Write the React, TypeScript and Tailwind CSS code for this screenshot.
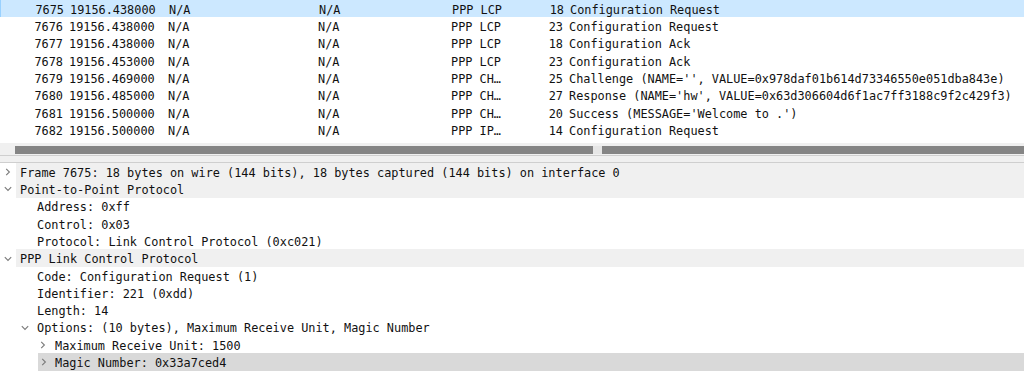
import React from 'react';

type Packet = {
  no: string;
  time: string;
  src: string;
  dst: string;
  proto: string;
  len: string;
  info: string;
};

const packets: Packet[] = [
  { no: '7675', time: '19156.438000', src: 'N/A', dst: 'N/A', proto: 'PPP LCP', len: '18', info: 'Configuration Request' },
  { no: '7676', time: '19156.438000', src: 'N/A', dst: 'N/A', proto: 'PPP LCP', len: '23', info: 'Configuration Request' },
  { no: '7677', time: '19156.438000', src: 'N/A', dst: 'N/A', proto: 'PPP LCP', len: '18', info: 'Configuration Ack' },
  { no: '7678', time: '19156.453000', src: 'N/A', dst: 'N/A', proto: 'PPP LCP', len: '23', info: 'Configuration Ack' },
  { no: '7679', time: '19156.469000', src: 'N/A', dst: 'N/A', proto: 'PPP CH…', len: '25', info: "Challenge (NAME='', VALUE=0x978daf01b614d73346550e051dba843e)" },
  { no: '7680', time: '19156.485000', src: 'N/A', dst: 'N/A', proto: 'PPP CH…', len: '27', info: "Response (NAME='hw', VALUE=0x63d306604d6f1ac7ff3188c9f2c429f3)" },
  { no: '7681', time: '19156.500000', src: 'N/A', dst: 'N/A', proto: 'PPP CH…', len: '20', info: "Success (MESSAGE='Welcome to .')" },
  { no: '7682', time: '19156.500000', src: 'N/A', dst: 'N/A', proto: 'PPP IP…', len: '14', info: 'Configuration Request' },
];

type Node = {
  text: string;
  level: 0 | 1 | 2;
  arrow?: 'right' | 'down';
  top?: boolean;
  selected?: boolean;
};

const tree: Node[] = [
  { text: 'Frame 7675: 18 bytes on wire (144 bits), 18 bytes captured (144 bits) on interface 0', level: 0, arrow: 'right', top: true },
  { text: 'Point-to-Point Protocol', level: 0, arrow: 'down', top: true },
  { text: 'Address: 0xff', level: 1 },
  { text: 'Control: 0x03', level: 1 },
  { text: 'Protocol: Link Control Protocol (0xc021)', level: 1 },
  { text: 'PPP Link Control Protocol', level: 0, arrow: 'down', top: true },
  { text: 'Code: Configuration Request (1)', level: 1 },
  { text: 'Identifier: 221 (0xdd)', level: 1 },
  { text: 'Length: 14', level: 1 },
  { text: 'Options: (10 bytes), Maximum Receive Unit, Magic Number', level: 1, arrow: 'down' },
  { text: 'Maximum Receive Unit: 1500', level: 2, arrow: 'right' },
  { text: 'Magic Number: 0x33a7ced4', level: 2, arrow: 'right', selected: true },
];

const indents = ['w-0', 'w-[17px]', 'w-[35px]'];

const Arrow = ({ dir }: { dir?: 'right' | 'down' }) => {
  if (!dir) return null;
  if (dir === 'right') {
    return (
      <svg width="6" height="8" viewBox="0 0 6 8">
        <path d="M1.2 0.8 L4.4 4 L1.2 7.2" fill="none" stroke="#7a7a7a" strokeWidth="1.1" />
      </svg>
    );
  }
  return (
    <svg width="8" height="6" viewBox="0 0 8 6">
      <path d="M0.8 1.2 L4 4.4 L7.2 1.2" fill="none" stroke="#7a7a7a" strokeWidth="1.1" />
    </svg>
  );
};

const PacketRow = ({ p, selected }: { p: Packet; selected: boolean }) => (
  <div
    className={`flex h-[17.3px] items-center pt-[4px] whitespace-pre ${
      selected ? 'bg-[#cce8ff] border-l border-[#99d1ff]' : ''
    }`}
  >
    <div className="w-[63px] text-right">{p.no}</div>
    <div className="w-[105px] pl-[6px]">{p.time}</div>
    <div className="w-[150px]">{p.src}</div>
    <div className="w-[133px]">{p.dst}</div>
    <div className="w-[89px]">{p.proto}</div>
    <div className="w-[23px] text-right">{p.len}</div>
    <div className="flex-1 pl-[6px]">{p.info}</div>
  </div>
);

const TreeRow = ({ n }: { n: Node }) => {
  if (n.selected) {
    return (
      <div className="flex h-[17.3px] whitespace-pre">
        <div className="w-[38px]" />
        <div className="flex flex-1 items-center bg-[#d9d9d9] pt-[4px]">
          <div className="flex w-[13px] items-center pl-[3px] -mt-[3px]">
            <Arrow dir={n.arrow} />
          </div>
          <div className="pl-[4px]">{n.text}</div>
        </div>
      </div>
    );
  }
  return (
    <div className="flex h-[17.3px] whitespace-pre">
      <div className={indents[n.level]} />
      <div className="flex w-[16px] items-center justify-center pt-[1px]">
        <Arrow dir={n.arrow} />
      </div>
      <div className={`flex flex-1 items-center pl-[4px] pt-[4px] ${n.top ? 'bg-[#f0f0f0]' : ''}`}>{n.text}</div>
    </div>
  );
};

export default function App() {
  return (
    <div
      className="w-[1024px] h-[371px] overflow-hidden bg-white text-[11.86px] text-[#111111] flex flex-col"
      style={{ fontFamily: '"DejaVu Sans Mono", "Liberation Mono", monospace' }}
    >
      <div className="h-[143px] bg-white">
        {packets.map((p, i) => (
          <PacketRow key={p.no} p={p} selected={i === 0} />
        ))}
      </div>
      <div className="flex h-[12px] items-start bg-[#f0f0f0] pt-[3px]">
        <div className="w-[15px]" />
        <div className="h-[8px] w-[578px] bg-[#858585]" />
        <div className="h-[8px] w-[9px] bg-[#e6e6e6]" />
        <div className="h-[8px] flex-1 bg-[#858585]" />
      </div>
      <div className="h-[8px] border-y border-[#cfcfcf] bg-[#f0f0f0]" />
      <div className="flex-1 bg-white">
        {tree.map((n, i) => (
          <TreeRow key={i} n={n} />
        ))}
      </div>
    </div>
  );
}
